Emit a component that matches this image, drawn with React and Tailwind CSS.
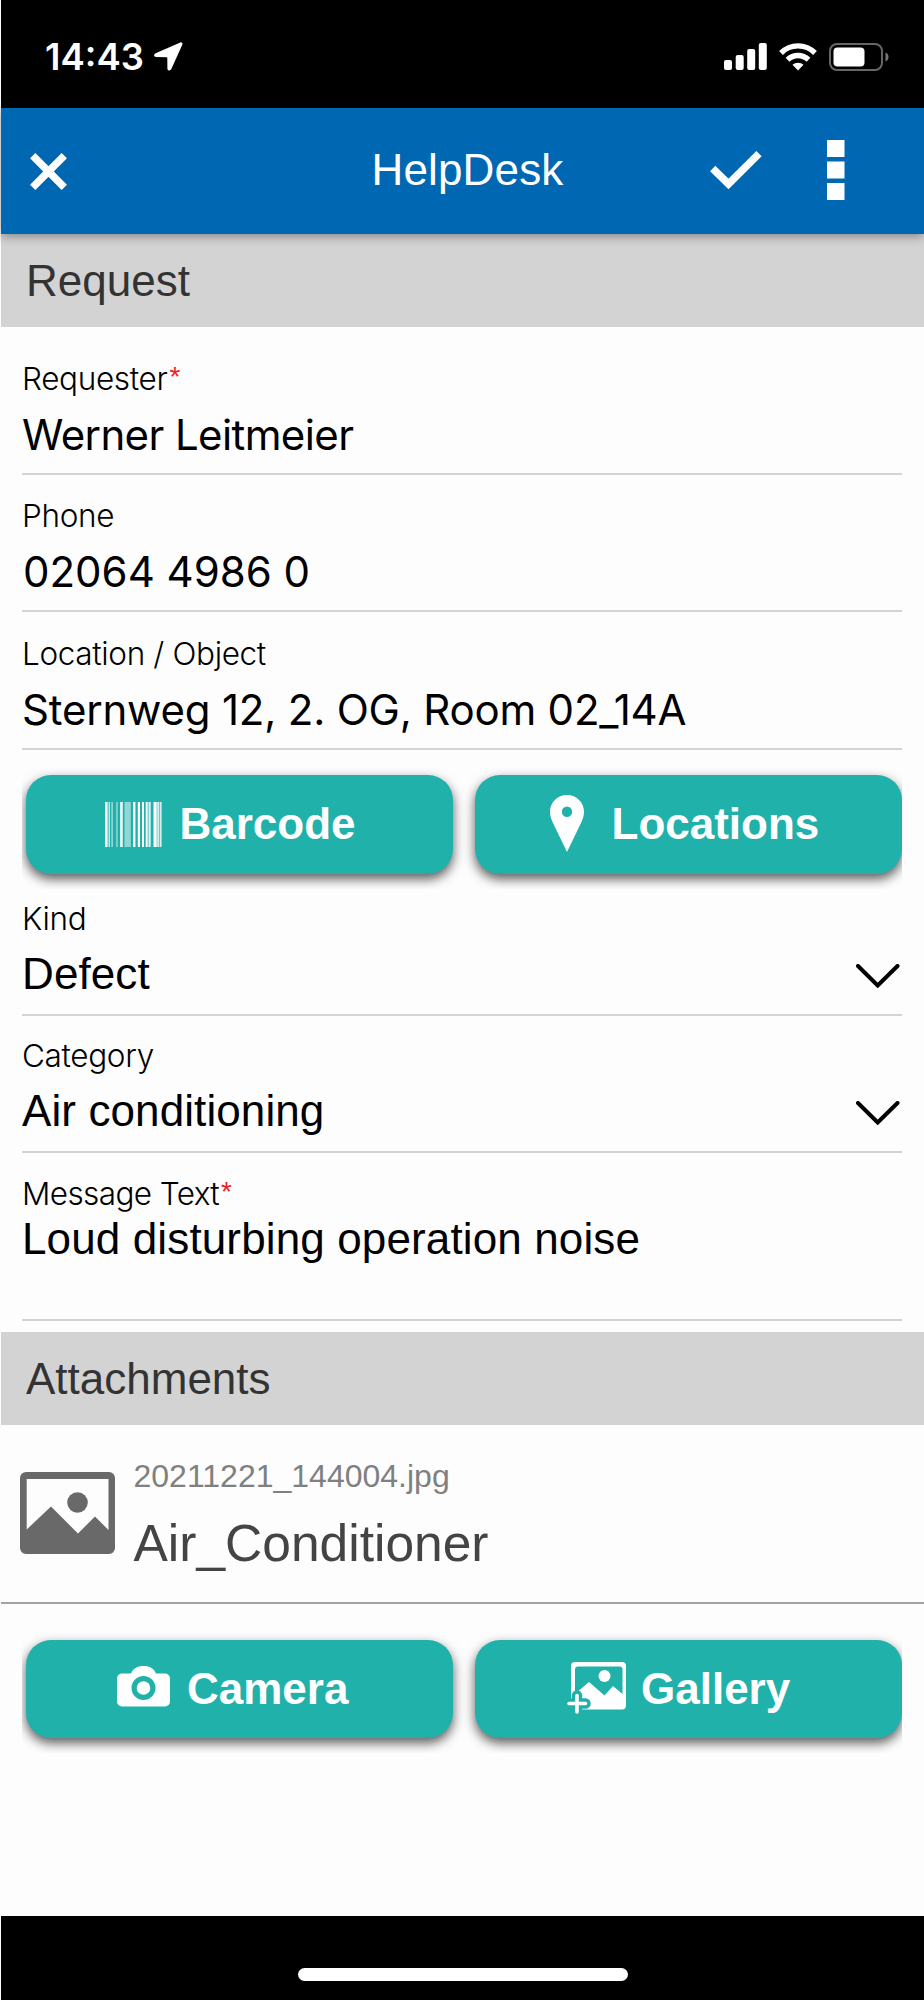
import React from "react";

const HELV = "font-['Liberation_Sans',Arial,sans-serif]";

function StatusBar() {
  return (
    <div className="flex h-[108px] items-center justify-between bg-black pl-[44px] pr-[35px] pt-[5px] text-white">
      <div className="flex items-center gap-[10px]">
        <span className="font-['Inter',sans-serif] text-[36.5px] font-semibold leading-[40px]">14:43</span>
        <svg width="29" height="29" viewBox="0 0 29 29" fill="currentColor" className="-mt-[1px]">
          <path d="M26.3.4 1.6 11.3C-.6 12.4-.2 15 2 15.1l10.6.2c.5 0 .7.2.7.7l.1 10.4c.1 2.5 2.8 2.900 3.9.7L28.3 2.7C28.900 1.2 27.8-.2 26.3.4z" />
        </svg>
      </div>
      <div className="flex items-center gap-[12px]">
        <svg width="43" height="27" viewBox="0 0 43 27" fill="currentColor">
          <rect x="0" y="17" width="8" height="10" rx="2" />
          <rect x="11.7" y="12" width="8" height="15" rx="2" />
          <rect x="23.2" y="6" width="8" height="21" rx="2" />
          <rect x="34.8" y="0" width="8" height="27" rx="2" />
        </svg>
        <svg width="38" height="28" viewBox="0 0 38 28" fill="none" stroke="currentColor" strokeWidth="5.400">
          <path d="M2 10C11.500.5 26.500.5 36 10" />
          <path d="M8.500 16.800C14.500 11 23.500 11 29.500 16.800" />
          <path d="M19 27.500l-5.500-5.700c3-2.800 8-2.800 11 0z" fill="currentColor" stroke="none" />
        </svg>
        <svg width="60" height="28" viewBox="0 0 60 28">
          <rect x="1" y="1" width="52" height="26" rx="7" fill="none" stroke="#666" strokeWidth="2" />
          <rect x="4.500" y="4.500" width="31" height="19" rx="4" fill="#fff" />
          <path d="M56.500 9.500c4 1.500 4 7.500 0 9z" fill="#777" />
        </svg>
      </div>
    </div>
  );
}

function Header() {
  return (
    <div className="relative z-10 grid h-[126px] grid-cols-[1fr_auto_1fr] items-center bg-[#0068b2] text-white shadow-[0_2px_10px_rgba(0,0,0,0.4)]">
      <svg width="37" height="37" viewBox="0 0 37 37" className="ml-[28.500px]" stroke="currentColor" strokeWidth="7.500">
        <path d="M2.700 2.700 34.300 34.300M34.300 2.700 2.700 34.300" />
      </svg>
      <h1 className="-mt-[2px] ml-[10px] text-[44px] leading-[50px] tracking-[0.15px]">HelpDesk</h1>
      <div className="flex items-center justify-end gap-[65px] pr-[79px]">
        <svg width="52" height="39" viewBox="0 0 52 39" fill="none" stroke="currentColor" strokeWidth="7.500" className="-mt-[2px]">
          <path d="M2.700 17.500 18.500 33 49 2.700" />
        </svg>
        <svg width="18" height="60" viewBox="0 0 18 60" fill="currentColor" className="-mt-[2px]">
          <rect width="17.500" height="17" />
          <rect y="21.500" width="17.500" height="17" />
          <rect y="43" width="17.500" height="17" />
        </svg>
      </div>
    </div>
  );
}

function SectionTitle({ children }) {
  return (
    <h2 className="h-[93px] bg-[#d3d3d3] pl-[25px] pt-[22px] text-[44px] leading-[50px] text-[#333]">{children}</h2>
  );
}

function Label({ children, required, className = "tracking-[-0.35px]" }) {
  return (
    <div className={`flex whitespace-nowrap font-['Inter',sans-serif] text-[31.500px] font-light leading-[40px] ${className}`}>
      {children}
      {required && (
        <span className="ml-[2px] -mt-[2px] font-['Liberation_Sans',Arial,sans-serif] text-[28px] font-normal text-[#ee1c25]">*</span>
      )}
    </div>
  );
}

function TextField({ label, value, required, className, valueClass = "" }) {
  return (
    <div className={`flex flex-col justify-end border-b-2 border-[#d3d3d3] pb-[13px] ${className}`}>
      <Label required={required}>{label}</Label>
      <div className={`mt-[11px] whitespace-nowrap font-['Inter',sans-serif] text-[42px] leading-[50px] ${valueClass}`}>{value}</div>
    </div>
  );
}

function SelectField({ label, value, className }) {
  return (
    <div className={`flex flex-col justify-end border-b-2 border-[#d3d3d3] pb-[15px] ${className}`}>
      <Label>{label}</Label>
      <div className="mt-[10px] flex items-center justify-between text-[44px] leading-[50px] tracking-[0.1px]">
        <span>{value}</span>
        <svg width="44" height="24" viewBox="0 0 44 24" fill="none" stroke="#000" strokeWidth="4" strokeLinecap="round" className="mr-[2px] mt-[3px]">
          <path d="M2 2 21.700 21.500 41.500 2" />
        </svg>
      </div>
    </div>
  );
}

function ActionButton({ icon, className, children }) {
  return (
    <button className={`flex h-[98.500px] w-[427px] items-center rounded-[25px] bg-[#21b1ab] text-[44px] font-bold leading-[50px] text-white shadow-[0_5px_12px_rgba(0,0,0,0.65)] ${className}`}>
      {icon}
      <span>{children}</span>
    </button>
  );
}

// [x, width, opacity] of each bar
const bars = [
  [0, 2.6, 1], [3.5, 1.5, 0.7], [6.4, 1.4, 0.6], [11.3, 1.3, 0.6], [15.2, 2.5, 1], [19.5, 6.3, 0.5], [28, 2.4, 1],
  [32.800, 2.2, 1], [37, 2, 1], [40.7, 2, 1], [43.5, 2.2, 0.85], [48.5, 3.2, 1], [52.2, 1.8, 0.8], [54.6, 2, 0.8],
];

function BarcodeIcon() {
  return (
    <svg width="57" height="45" viewBox="0 0 57 45" fill="currentColor">
      {bars.map(([x, w, o]) => <rect key={x} x={x} width={w} height="45" opacity={o} />)}
    </svg>
  );
}

function PinIcon() {
  return (
    <svg width="34" height="57" viewBox="0 0 34 57" fill="currentColor" className="-mt-[2px]">
      <path fillRule="evenodd" d="M17 0C7.500 0 0 7.500 0 16.500c0 5 1.500 8 3 11.500L17 57l14-29c1.500-3.500 3-6.500 3-11.500C34 7.500 26.500 0 17 0zm0 11.500a5.200 5.200 0 1 1 0 10.400 5.200 5.200 0 0 1 0-10.400z" />
    </svg>
  );
}

function CameraIcon() {
  return (
    <svg width="53" height="41" viewBox="0 0 53 41" fill="currentColor" className="-mt-[4px]">
      <path fillRule="evenodd" d="M14 7.500C16 2.500 20 0 26.500 0S37 2.500 39 7.500h9a5 5 0 0 1 5 5v23a5 5 0 0 1-5 5H5a5 5 0 0 1-5-5v-23a5 5 0 0 1 5-5zM26.500 10a12 12 0 1 0 0 24 12 12 0 0 0 0-24z" />
      <circle cx="26.500" cy="22" r="6.800" />
    </svg>
  );
}

function GalleryIcon() {
  return (
    <svg width="60" height="52" viewBox="0 0 60 52" className="-mt-[2px]">
      <rect x="4" y="0" width="55" height="47.500" rx="4" fill="#fff" />
      <path d="M8 41V7.500a3 3 0 0 1 3-3h41.500a3 3 0 0 1 3 3V32l-9.500-8-8.500 9.500-15.500-13.500L8 32z" fill="#21b1ab" />
      <circle cx="37.500" cy="14" r="6" fill="#fff" />
      <path d="M10 33.500v16.500M2 41.500h16.500" stroke="#21b1ab" strokeWidth="10.500" strokeLinecap="round" />
      <path d="M10 33.500v16.500M2 41.500h16.500" stroke="#fff" strokeWidth="3.600" strokeLinecap="round" />
    </svg>
  );
}

function Attachment({ file, name }) {
  return (
    <div className="flex h-[179px] items-start border-b-2 border-[#a3a3a3] pl-[18.500px]">
      <svg width="95" height="82" viewBox="0 0 95 82" fill="#696969" className="mt-[46.500px] shrink-0">
        <path fillRule="evenodd" d="M6 0h83a6 6 0 0 1 6 6v70a6 6 0 0 1-6 6H6a6 6 0 0 1-6-6V6a6 6 0 0 1 6-6zm.7 7v50.500L31 34.500l27 27 17-17 13.500 13.500V7z" />
        <circle cx="57.500" cy="30.500" r="10.300" />
      </svg>
      <div className="ml-[19px] pt-[31px]">
        <div className="text-[32px] leading-[40px] text-[#808080]">{file}</div>
        <div className="mt-[17px] text-[51.500px] leading-[60px] text-[#444]">{name}</div>
      </div>
    </div>
  );
}

export default function App() {
  return (
    <div className={`flex h-[2000px] w-[924px] flex-col overflow-hidden bg-[#fdfdfd] pl-px text-black ${HELV}`}>
      <StatusBar />
      <Header />

      <SectionTitle>Request</SectionTitle>
      <div className="pl-[21px] pr-[22px]">
        <TextField label="Requester" value="Werner Leitmeier" required className="h-[148px]" valueClass="tracking-[-0.6px]" />
        <TextField label="Phone" value="02064 4986 0" className="h-[137px]" valueClass="pl-px" />
        <TextField label="Location / Object" value="Sternweg 12, 2. OG, Room 02_14A" className="h-[138px]" valueClass="tracking-[-0.2px]" />
        <div className="-mb-[15px] flex gap-[22px] overflow-hidden pb-[15px] pl-[4px] pt-[25px]">
          <ActionButton icon={<BarcodeIcon />} className="gap-[18px] pl-[78.500px]">Barcode</ActionButton>
          <ActionButton icon={<PinIcon />} className="gap-[28px] pl-[74.500px]">Locations</ActionButton>
        </div>
        <SelectField label="Kind" value="Defect" className="h-[142.500px]" />
        <SelectField label="Category" value="Air conditioning" className="h-[137px]" />
        <div className="h-[167.500px] border-b-2 border-[#d3d3d3] pt-[20.500px]">
          <Label required className="tracking-[-0.6px]">Message Text</Label>
          <div className="text-[44px] leading-[50px] tracking-[0.13px]">Loud disturbing operation noise</div>
        </div>
      </div>

      <div className="mt-[11.500px]">
        <SectionTitle>Attachments</SectionTitle>
        <Attachment file="20211221_144004.jpg" name="Air_Conditioner" />
        <div className="ml-[21px] mr-[22px] flex gap-[22px] overflow-hidden pb-[15px] pl-[4px] pt-[35.500px]">
          <ActionButton icon={<CameraIcon />} className="gap-[17px] pl-[91px]">Camera</ActionButton>
          <ActionButton icon={<GalleryIcon />} className="gap-[14px] pl-[92px]">Gallery</ActionButton>
        </div>
      </div>

      <div className="mt-auto flex h-[84px] shrink-0 justify-center bg-black pt-[52px]">
        <div className="h-[12.500px] w-[330px] rounded-full bg-white" />
      </div>
    </div>
  );
}
